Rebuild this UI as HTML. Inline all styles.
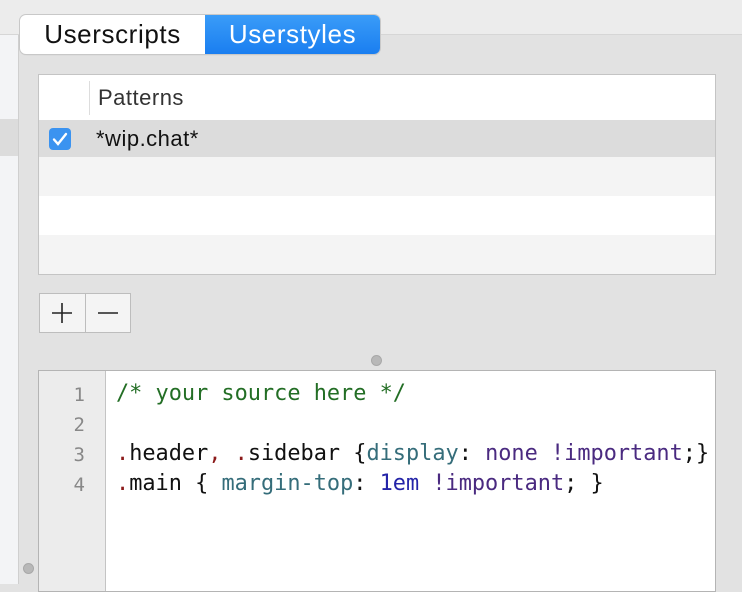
<!DOCTYPE html>
<html><head><style>
body{margin:0;width:742px;height:584px;overflow:hidden;background:#e2e2e2;position:relative;font-family:"Liberation Sans",sans-serif}
.abs{position:absolute}
.mono{font-family:"DejaVu Sans Mono","Liberation Mono",monospace;font-size:21.9px}
</style></head><body>
<div class="abs" style="left:0;top:0;width:742px;height:34px;background:#ececec;border-bottom:1px solid #d6d6d6"></div>
<div class="abs" style="left:0;top:35px;width:18px;height:549px;background:#f3f4f6;border-right:1px solid #cfcfcf"></div>
<div class="abs" style="left:0;top:119px;width:18px;height:37px;background:#dcdcdc"></div>
<!-- segmented -->
<div class="abs" style="left:20px;top:15px;width:360px;height:39px;border-radius:6px;background:#fff;box-shadow:0 0 0 1px #c8c8c8,0 1px 1px rgba(0,0,0,.15);overflow:hidden">
 <div class="abs" style="left:0;top:0;width:185px;height:39px;line-height:39px;text-align:center;font-size:26px;letter-spacing:0.6px;color:#111">Userscripts</div>
 <div class="abs" style="left:185px;top:0;width:175px;height:39px;line-height:39px;text-align:center;font-size:26px;letter-spacing:0.6px;color:#fff;background:linear-gradient(#3a9cf8,#1a7ef0)">Userstyles</div>
</div>
<!-- table -->
<div class="abs" style="left:38px;top:74px;width:676px;height:199px;border:1px solid #c4c4c4;background:#fff">
 <div class="abs" style="left:50px;top:6px;width:1px;height:34px;background:#ddd"></div>
 <div class="abs" style="left:59px;top:0;height:45px;line-height:45px;font-size:22px;letter-spacing:0.5px;color:#333">Patterns</div>
 <div class="abs" style="left:0;top:45px;width:676px;height:37px;background:#dcdcdc"></div>
 <div class="abs" style="left:10px;top:53px;width:22px;height:22px;border-radius:4px;background:#3b93f0">
  <svg width="22" height="22"><path d="M5 11.5l4 4.5 8-10" stroke="#fff" stroke-width="2.4" fill="none" stroke-linecap="round"/></svg></div>
 <div class="abs" style="left:57px;top:45px;line-height:37px;font-size:22px;letter-spacing:0.5px;color:#111">*wip.chat*</div>
 <div class="abs" style="left:0;top:82px;width:676px;height:39px;background:#f4f4f4"></div>
 <div class="abs" style="left:0;top:160px;width:676px;height:39px;background:#f4f4f4"></div>
</div>
<!-- buttons -->
<div class="abs" style="left:39px;top:293px;width:90px;height:38px;border:1px solid #bdbdbd;background:#f4f4f4">
 <div class="abs" style="left:45px;top:0;width:1px;height:38px;background:#bdbdbd"></div>
 <svg class="abs" style="left:0;top:0" width="90" height="38"><path d="M12 19h20M22 9v20M58 19h20" stroke="#222" stroke-width="1.6"/></svg>
</div>
<div class="abs" style="left:371px;top:355px;width:11px;height:11px;border-radius:50%;background:#b8b8b8;border:1px solid #a8a8a8;box-sizing:border-box"></div>
<div class="abs" style="left:23px;top:563px;width:11px;height:11px;border-radius:50%;background:#b8b8b8;border:1px solid #a8a8a8;box-sizing:border-box"></div>
<!-- editor -->
<div class="abs" style="left:38px;top:370px;width:676px;height:220px;border:1px solid #b4b4b4;background:#fff">
 <div class="abs" style="left:0;top:0;width:66px;height:220px;background:#ececec;border-right:1px solid #c4c4c4"></div>
 <div class="abs mono" style="left:0;top:9px;width:46px;text-align:right;line-height:30px;color:#888;font-size:19px">1<br>2<br>3<br>4</div>
 <div class="abs mono" style="left:77px;top:8px;line-height:30px;white-space:pre;color:#111"><span style="color:#236e25">/* your source here */</span>

<span style="color:#8b1a1a">.</span>header<span style="color:#8b1a1a">,</span> <span style="color:#8b1a1a">.</span>sidebar {<span style="color:#356d7a">display</span>: <span style="color:#4a2a80">none !important</span>;}
<span style="color:#8b1a1a">.</span>main { <span style="color:#356d7a">margin-top</span>: <span style="color:#2424a8">1em</span> <span style="color:#4a2a80">!important</span>; }</div>
</div>
</body></html>
